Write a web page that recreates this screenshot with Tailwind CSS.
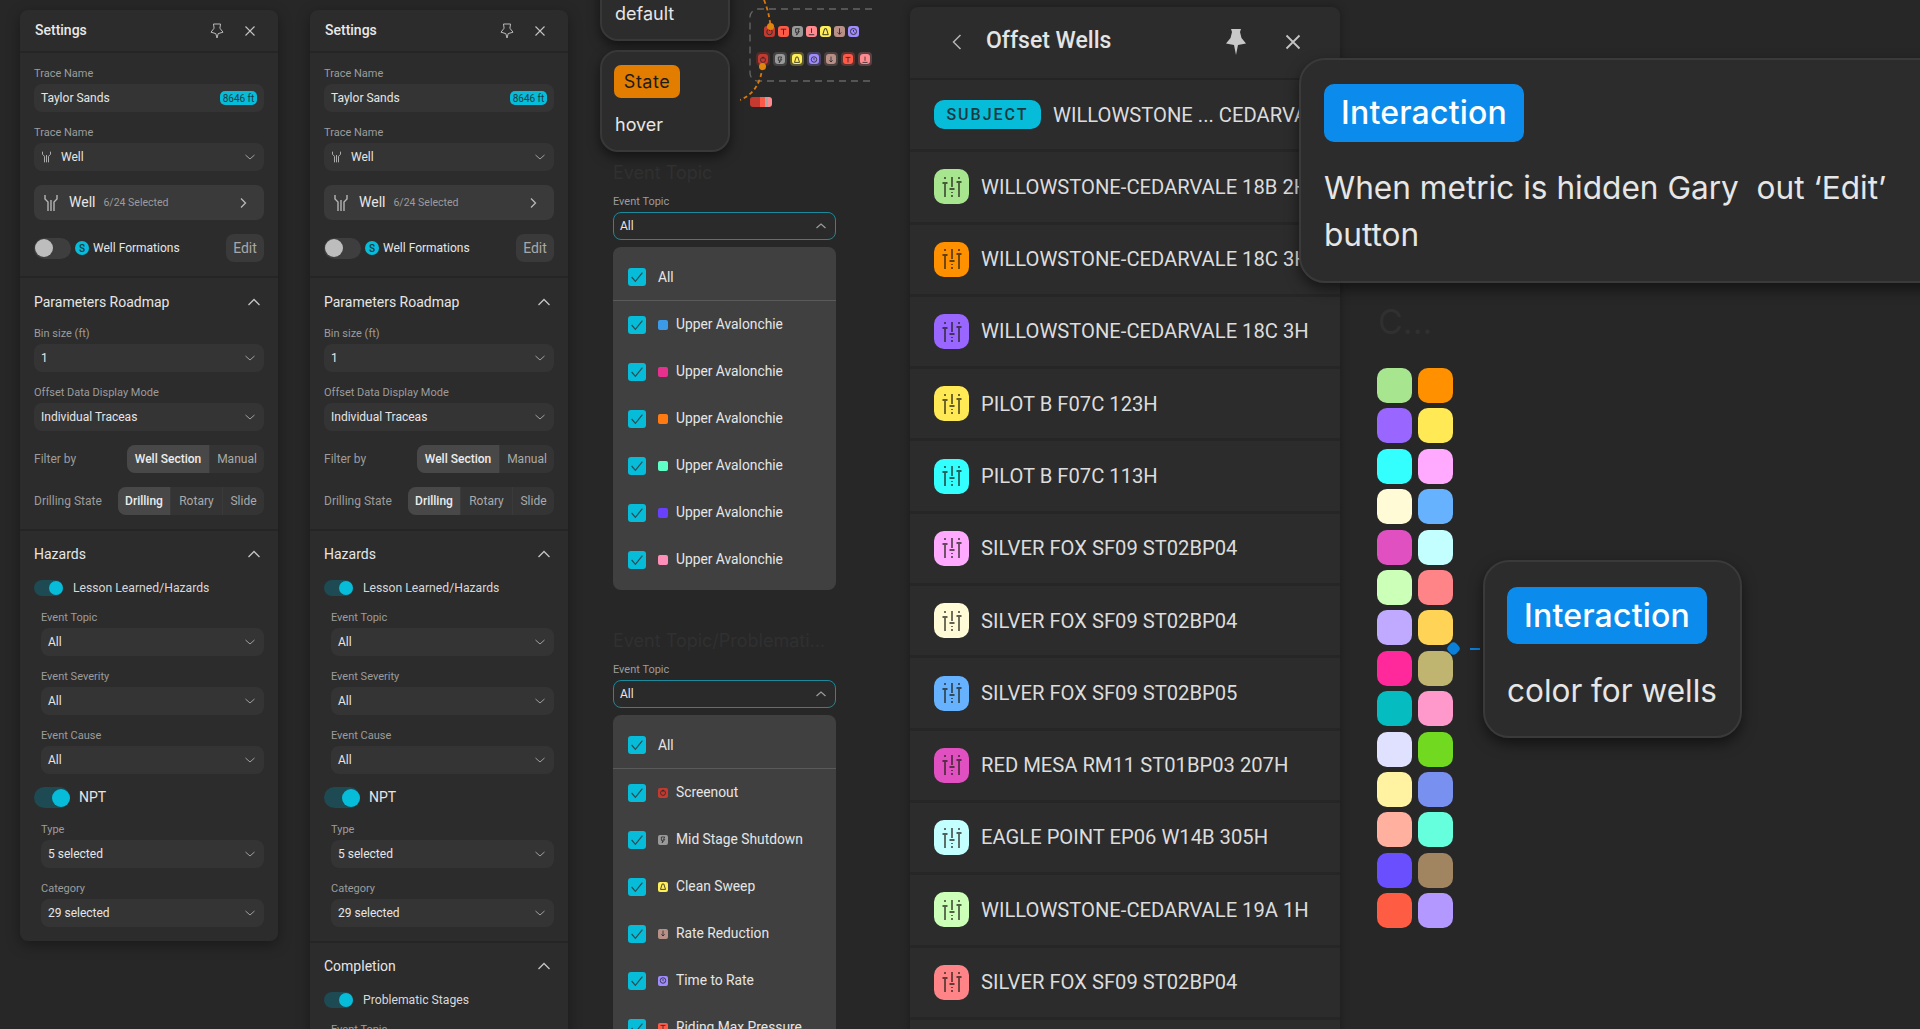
<!DOCTYPE html>
<html lang="en">
<head>
  <meta charset="UTF-8">
  <meta name="viewport" content="width=device-width, initial-scale=1.0">
  <title>Settings and Offset Wells</title>
  <script src="https://cdn.jsdelivr.net/npm/@tailwindcss/browser@4"></script>
</head>
<body class="bg-[#272727] font-['Roboto',sans-serif] text-[#e6e6e6]">
<div class="relative w-[1920px] h-[1029px] overflow-hidden">

  <!-- Settings panels -->
  <div id="panel-a" class="absolute left-[20px] top-[10px] w-[258px] bg-[#2c2c2c] rounded-lg shadow-[0_4px_14px_rgba(0,0,0,0.35)]"></div>
  <div id="panel-b" class="absolute left-[310px] top-[10px] w-[258px] bg-[#2c2c2c] rounded-lg shadow-[0_4px_14px_rgba(0,0,0,0.35)]"></div>

  <!-- State cards -->
  <div class="absolute left-[600px] top-[-60px] w-[130px] h-[101px] rounded-[18px] bg-[#2c2c2c] border-2 border-[#383838] shadow-[0_5px_12px_rgba(0,0,0,0.5)] flex flex-col justify-end pl-[13px] pb-[11px] font-['Inter',sans-serif]">
    <span class="text-[18px] leading-[28px] text-[#e6e6e6]">default</span>
  </div>
  <div class="absolute left-[600px] top-[50px] w-[130px] h-[102px] rounded-[18px] bg-[#2c2c2c] border-2 border-[#383838] shadow-[0_5px_12px_rgba(0,0,0,0.5)] pt-[13px] pl-[12px] font-['Inter',sans-serif]">
    <div class="w-[66px] h-[33px] rounded-[7px] bg-[#e27d00] flex items-center justify-center text-[18px] tracking-[0.5px] text-[#1c1c1c]">State</div>
    <div class="mt-[13px] ml-[1px] text-[18px] leading-[28px] text-[#e6e6e6]">hover</div>
  </div>

  <!-- Small flow diagram -->
  <div class="absolute left-[740px] top-0 w-[140px] h-[115px]">
    <svg class="absolute inset-0" width="140" height="115" fill="none">
      <path d="M132 9H18a8 8 0 0 0-8 8V73a8 8 0 0 0 8 8H132" stroke="#666" stroke-width="1.3" stroke-dasharray="7 5"/>
      <path d="M24 0Q29 12 30.5 26" stroke="#d97a0c" stroke-width="1.8" stroke-dasharray="4 3"/>
      <path d="M22.5 66Q20 92 0 100" stroke="#d97a0c" stroke-width="1.8" stroke-dasharray="4 3"/>
    </svg>
    <div id="diagram-a" class="absolute left-[24px] top-[26px] flex gap-[3px]"></div>
    <div id="diagram-b" class="absolute left-[16px] top-[52px] flex gap-[3px]"></div>
    <div class="absolute left-[27px] top-[23px] w-[7px] h-[7px] rounded-full bg-[#e0860f]"></div>
    <div class="absolute left-[19px] top-[63px] w-[7px] h-[7px] rounded-full bg-[#e0860f]"></div>
    <div class="absolute left-[10px] top-[97px] w-[22px] h-[10px] rounded-[3px] overflow-hidden flex">
      <div class="w-[10px] bg-[#c53a30]"></div><div class="w-[5px] bg-[#ff5a48]"></div><div class="w-[3px] bg-[#a8a8a8]"></div><div class="w-[4px] bg-[#ff8a90]"></div>
    </div>
  </div>

  <!-- Dropdown groups -->
  <div class="absolute left-[613px] top-[161px] text-[18px] leading-[24px] text-[#303030] font-['Inter',sans-serif]">Event Topic</div>
  <div id="drop-a" class="absolute left-[613px] top-[194px] w-[223px]"></div>
  <div class="absolute left-[613px] top-[629px] text-[18px] leading-[24px] text-[#303030] font-['Inter',sans-serif]">Event Topic/Problemati...</div>
  <div id="drop-b" class="absolute left-[613px] top-[662px] w-[223px]"></div>

  <!-- Offset wells -->
  <div id="wells" class="absolute left-[910px] top-[7px] w-[430px] h-[1040px] bg-[#2c2c2c] rounded-lg overflow-hidden shadow-[0_0_10px_rgba(0,0,0,0.3)]"></div>

  <!-- Note over the wells panel -->
  <div class="absolute left-[1299px] top-[58px] w-[680px] h-[225px] rounded-[26px] bg-[#2c2c2c] border-2 border-[#3a3a3a] shadow-[0_6px_14px_rgba(0,0,0,0.5)] pl-[23px] pt-[24px] font-['Inter',sans-serif]">
    <div class="w-[200px] h-[58px] rounded-[10px] bg-[#0b8cec] flex items-center justify-center text-[32px] font-medium tracking-[0.2px] text-white">Interaction</div>
    <div class="mt-[22px] w-[590px] text-[31.6px] leading-[47px] text-[#e6e6e6] whitespace-pre-wrap">When metric is hidden Gary  out ‘Edit’ button</div>
  </div>

  <div class="absolute left-[1378px] top-[302px] text-[34px] leading-[40px] text-[#303030] font-['Inter',sans-serif]">C...</div>

  <!-- Well colours -->
  <div id="swatches" class="absolute left-[1377px] top-[368px] grid grid-cols-2 gap-x-[6px] gap-y-[5.4px]"></div>

  <!-- Second note -->
  <div class="absolute left-[1448px] top-[643px] w-[11px] h-[11px] rotate-45 rounded-[4px] bg-[#0b80d8]"></div>
  <div class="absolute left-[1470px] top-[648px] w-[10px] h-[2px] bg-[#0b80d8]"></div>
  <div class="absolute left-[1483px] top-[560px] w-[259px] h-[178px] rounded-[26px] bg-[#2c2c2c] border-2 border-[#3a3a3a] shadow-[0_6px_14px_rgba(0,0,0,0.5)] pl-[22px] pt-[25px] font-['Inter',sans-serif]">
    <div class="w-[200px] h-[57px] rounded-[10px] bg-[#0b8cec] flex items-center justify-center text-[32px] font-medium tracking-[0.2px] text-white">Interaction</div>
    <div class="mt-[27px] text-[31.5px] leading-[40px] text-[#e6e6e6] whitespace-nowrap">color for wells</div>
  </div>
</div>

<script>
  // small shared icons
  const chevDown = `<svg width="14" height="14" viewBox="0 0 14 14" fill="none" stroke="#a0a0a0" stroke-width="1"><path d="M2.500 5l4.500 4 4.500-4"/></svg>`;
  const chevUp = `<svg width="16" height="16" viewBox="0 0 16 16" fill="none" stroke="#c4c4c4" stroke-width="1.3"><path d="M2.500 11L8 5.500l5.500 5.500"/></svg>`;
  const chevUpSmall = `<svg width="14" height="14" viewBox="0 0 14 14" fill="none" stroke="#9a9a9a" stroke-width="1.3"><path d="M2.500 9l4.500-4 4.500 4"/></svg>`;
  const chevRight = `<svg width="14" height="14" viewBox="0 0 14 14" fill="none" stroke="#b8b8b8" stroke-width="1.3"><path d="M5 2.500L9.500 7 5 11.500"/></svg>`;
  const closeIcon = `<svg width="14" height="14" viewBox="0 0 14 14" fill="none" stroke="#c4c4c4" stroke-width="1.1"><path d="M2.500 2.500l9 9M11.500 2.500l-9 9"/></svg>`;
  const pinOutline = `<svg width="14" height="16" viewBox="0 0 14 16" fill="none" stroke="#bbbbbb" stroke-width="1"><path d="M3.500 1h7l-.6 4.200L13 9.200 8.200 10.600 7 15l-1.200-4.400L1 9.200l3.100-4z"/></svg>`;
  const wellIcon = (w, h) => `<svg width="${w}" height="${h}" viewBox="0 0 16 18" fill="none" stroke="#b4b4b4" stroke-width="1.400"><path d="M2 1v4l3 3v9M14 1v4l-3 3v9M8 6v11"/></svg>`;

  function label(text) {
    return `<div class="h-[14px] mb-[4px] text-[11px] leading-[16px] text-[#9c9c9c]">${text}</div>`;
  }
  function select(text, icon) {
    return `<div class="h-[28px] rounded-lg bg-[#343434] flex items-center justify-between pl-[7px] pr-[7px] text-[12px] text-[#e6e6e6]">
      <span class="flex items-center gap-[9px]">${icon || ''}${text}</span>${chevDown}</div>`;
  }
  function field(name, value, cls) {
    return `<div class="${cls}">${label(name)}${select(value)}</div>`;
  }
  function toggleOn(big) {
    return big
      ? `<div class="w-[36px] h-[21px] rounded-full bg-[#1d4a53] flex items-center justify-end"><div class="w-[18px] h-[18px] rounded-full bg-[#06bcd8]"></div></div>`
      : `<div class="w-[29px] h-[16px] rounded-full bg-[#1d4a53] flex items-center justify-end"><div class="w-[14px] h-[14px] rounded-full bg-[#06bcd8]"></div></div>`;
  }
  function sectionTitle(text) {
    return `<div class="h-[20px] flex items-center justify-between pr-[2px] text-[14px] text-[#e6e6e6]">${text}${chevUp}</div>`;
  }
  function segment(name, items) {
    const parts = items.map((it, i) => `<div class="h-full flex items-center justify-center ${it[1]} ${i == 0 ? 'bg-[#484848] font-medium text-[#ececec]' : 'border-l border-[#3a3a3a] text-[#aaaaaa]'}">${it[0]}</div>`).join('');
    return `<div class="mt-[14px] flex items-center justify-between"><span class="text-[12px] text-[#9c9c9c]">${name}</span>
      <div class="h-[28px] rounded-lg bg-[#343434] overflow-hidden flex text-[12px]">${parts}</div></div>`;
  }

  function settingsPanel(withCompletion) {
    return `
    <div class="h-[41px] pl-[15px] pr-[21px] flex items-center justify-between">
      <span class="text-[14px] font-medium text-[#e8e8e8]">Settings</span>
      <span class="flex items-center gap-[19px]">${pinOutline}${closeIcon}</span>
    </div>
    <div class="border-t-2 border-b-2 border-[#252525] px-[14px] pt-[13px] pb-[14px]">
      ${label('Trace Name')}
      <div class="h-[28px] rounded-lg bg-[#343434] flex items-center justify-between pl-[7px] pr-[7px] text-[12px]">Taylor Sands
        <span class="h-[14px] w-[37px] rounded-[5px] bg-[#06bcd8] text-[#1d3a40] text-[10px] flex items-center justify-center">8646 ft</span></div>
      <div class="mt-[13px]">${label('Trace Name')}${select('Well', wellIcon(11, 12))}</div>
      <div class="mt-[14px] h-[35px] rounded-lg bg-[#3a3a3a] flex items-center justify-between pl-[9px] pr-[14px]">
        <span class="flex items-center">${wellIcon(16, 18)}<span class="ml-[10px] text-[14px]">Well</span><span class="ml-[8px] text-[10.5px] text-[#9c9c9c]">6/24 Selected</span></span>${chevRight}
      </div>
      <div class="mt-[14px] h-[28px] flex items-center">
        <div class="w-[37px] h-[21px] rounded-full bg-[#3e3e3e] flex items-center pl-[1px]"><div class="w-[18px] h-[18px] rounded-full bg-[#bdbdbd]"></div></div>
        <span class="ml-[4px] w-[14px] h-[14px] rounded-full bg-[#06bcd8] text-[#1d3a40] text-[10px] font-medium flex items-center justify-center">S</span>
        <span class="ml-[4px] text-[12px]">Well Formations</span>
        <span class="ml-auto w-[38px] h-[28px] rounded-lg bg-[#3a3a3a] flex items-center justify-center text-[14px] text-[#a8a8a8]">Edit</span>
      </div>
    </div>
    <div class="border-b-2 border-[#252525] px-[14px] pt-[14px] pb-[14px]">
      ${sectionTitle('Parameters Roadmap')}
      ${field('Bin size (ft)', '1', 'mt-[14px]')}
      ${field('Offset Data Display Mode', 'Individual Traceas', 'mt-[13px]')}
      ${segment('Filter by', [['Well Section', 'w-[82px]'], ['Manual', 'w-[55px]']])}
      ${segment('Drilling State', [['Drilling', 'w-[52px]'], ['Rotary', 'w-[52px]'], ['Slide', 'w-[42px]']])}
    </div>
    <div class="${withCompletion ? 'border-b-2 border-[#252525]' : ''} px-[14px] pt-[13px] pb-[14px]">
      ${sectionTitle('Hazards')}
      <div class="mt-[16px] h-[16px] flex items-center gap-[10px] text-[12.2px] text-[#d8d8d8]">${toggleOn(false)}Lesson Learned/Hazards</div>
      <div class="ml-[7px]">
        ${field('Event Topic', 'All', 'mt-[14px]')}
        ${field('Event Severity', 'All', 'mt-[13px]')}
        ${field('Event Cause', 'All', 'mt-[13px]')}
      </div>
      <div class="mt-[13px] flex items-center gap-[9px] text-[14px]">${toggleOn(true)}NPT</div>
      <div class="ml-[7px]">
        ${field('Type', '5 selected', 'mt-[14px]')}
        ${field('Category', '29 selected', 'mt-[13px]')}
      </div>
    </div>
    ${withCompletion ? `<div class="px-[14px] pt-[13px] pb-[14px]">
      ${sectionTitle('Completion')}
      <div class="mt-[16px] h-[16px] flex items-center gap-[10px] text-[12.2px] text-[#d8d8d8]">${toggleOn(false)}Problematic Stages</div>
      <div class="ml-[7px]">${field('Event Topic', 'All', 'mt-[14px]')}</div>
    </div>` : ''}`;
  }
  document.getElementById('panel-a').innerHTML = settingsPanel(false);
  document.getElementById('panel-b').innerHTML = settingsPanel(true);

  // tiny event glyphs, drawn on a 12 box
  const glyphs = {
    power: '<circle cx="6" cy="6.500" r="3" /><path d="M6 2.500v3"/>',
    tee: '<path d="M3 3.500h6M6 3.500v6"/>',
    bolt: '<path d="M4 3h4L6.500 6H8L5 10l.7-3H4z"/>',
    base: '<path d="M6 2.500v5M3 9.500h6"/>',
    weight: '<path d="M5 3h2l2 6.500H3z"/>',
    down: '<path d="M6 2.500v6.500M4 7l2 2 2-2"/>',
    clock: '<circle cx="6" cy="6" r="3.300"/><path d="M6 4.200V6l1 1"/>'
  };
  function glyph(kind) {
    return `<svg width="11" height="11" viewBox="0 0 12 12" fill="none" stroke="#2b2b2b" stroke-width="1">${glyphs[kind]}</svg>`;
  }

  document.getElementById('diagram-a').innerHTML = [
    ['bg-[#c53a30]', 'power'], ['bg-[#ff5a48]', 'tee'], ['bg-[#999999]', 'bolt'], ['bg-[#ff8a90]', 'base'],
    ['bg-[#ffee58]', 'weight'], ['bg-[#b89088]', 'down'], ['bg-[#a08cff]', 'clock']
  ].map(d => `<div class="w-[11px] h-[11px] rounded-[3px] ${d[0]}">${glyph(d[1])}</div>`).join('');

  document.getElementById('diagram-b').innerHTML = [
    ['bg-[#c53a30]', 'bg-[#c53a30]/25', 'power'], ['bg-[#999999]', 'bg-[#999999]/25', 'bolt'], ['bg-[#ffee58]', 'bg-[#ffee58]/25', 'weight'],
    ['bg-[#a08cff]', 'bg-[#a08cff]/25', 'clock'], ['bg-[#b89088]', 'bg-[#b89088]/25', 'down'], ['bg-[#ff5a48]', 'bg-[#ff5a48]/25', 'tee'], ['bg-[#ff8a90]', 'bg-[#ff8a90]/25', 'base']
  ].map(d => `<div class="w-[14px] h-[14px] rounded-[4px] flex items-center justify-center ${d[1]}"><div class="w-[10px] h-[10px] rounded-[3px] overflow-hidden flex items-center justify-center ${d[0]}">${glyph(d[2])}</div></div>`).join('');

  // dropdowns
  const check = `<span class="w-[18px] h-[18px] rounded-[3px] bg-[#06bcd8] flex items-center justify-center shrink-0"><svg width="14" height="14" viewBox="0 0 13 13" fill="none" stroke="#2f4a50" stroke-width="1.100"><path d="M1.500 6.500l3.500 4 6.500-8"/></svg></span>`;
  function dropdown(rows) {
    return `<div class="h-[14px] mb-[4px] text-[11px] leading-[16px] text-[#9c9c9c]">Event Topic</div>
    <div class="h-[28px] rounded-lg border border-[#1a8a9c] bg-[#2a2a2a] flex items-center justify-between pl-[6px] pr-[7px] text-[12px]">All${chevUpSmall}</div>
    <div class="mt-[7px] rounded-lg bg-[#404040] pb-[7px]">
      <div class="h-[54px] pt-[7px] pl-[15px] flex items-center gap-[12px] text-[13.8px] border-b border-[#5a5a5a]">${check}All</div>
      ${rows.map(r => `<div class="h-[47px] pl-[15px] flex items-center text-[13.8px]">${check}<span class="ml-[12px] mr-[8px] w-[10px] h-[10px] rounded-[2px] flex items-center justify-center overflow-hidden ${r[0]}">${r[2] ? glyph(r[2]) : ''}</span>${r[1]}</div>`).join('')}
    </div>`;
  }
  document.getElementById('drop-a').innerHTML = dropdown([
    ['bg-[#3b9be8]', 'Upper Avalonchie'], ['bg-[#e8308f]', 'Upper Avalonchie'], ['bg-[#ff7a10]', 'Upper Avalonchie'],
    ['bg-[#5fffc8]', 'Upper Avalonchie'], ['bg-[#6a40ff]', 'Upper Avalonchie'], ['bg-[#ff8fb8]', 'Upper Avalonchie']
  ]);
  document.getElementById('drop-b').innerHTML = dropdown([
    ['bg-[#c53a30]', 'Screenout', 'power'], ['bg-[#999999]', 'Mid Stage Shutdown', 'bolt'], ['bg-[#ffee58]', 'Clean Sweep', 'weight'],
    ['bg-[#b89088]', 'Rate Reduction', 'down'], ['bg-[#a08cff]', 'Time to Rate', 'clock'], ['bg-[#ff5a48]', 'Riding Max Pressure', 'tee']
  ]);

  // offset wells list
  const sliders = `<svg width="26" height="26" viewBox="0 0 26 26" fill="none" stroke="#1e1e14" stroke-opacity="0.7" stroke-width="1.800"><path d="M6 3v2M3.500 9h5M6 9v14M13 3v10M10.500 15h5M13 18v1M13 21v2M20 3v2M17.500 8h5M20 8v15"/></svg>`;
  const wells = [
    ['bg-[#a8e58f]', 'WILLOWSTONE-CEDARVALE 18B 2H'], ['bg-[#ff9100]', 'WILLOWSTONE-CEDARVALE 18C 3H'], ['bg-[#9966ff]', 'WILLOWSTONE-CEDARVALE 18C 3H'],
    ['bg-[#ffe955]', 'PILOT B F07C 123H'], ['bg-[#33ffff]', 'PILOT B F07C 113H'], ['bg-[#ffaaff]', 'SILVER FOX SF09 ST02BP04'],
    ['bg-[#fffbd6]', 'SILVER FOX SF09 ST02BP04'], ['bg-[#66b2ff]', 'SILVER FOX SF09 ST02BP05'], ['bg-[#e050c0]', 'RED MESA RM11 ST01BP03 207H'],
    ['bg-[#c4ffff]', 'EAGLE POINT EP06 W14B 305H'], ['bg-[#ccffb8]', 'WILLOWSTONE-CEDARVALE 19A 1H'], ['bg-[#ff8488]', 'SILVER FOX SF09 ST02BP04'],
    ['bg-[#c0aaff]', '']
  ];
  document.getElementById('wells').innerHTML = `
    <div class="h-[73px] pb-[2px] border-b-2 border-[#242424] flex items-center pl-[39px] pr-[37px]">
      <svg width="16" height="20" viewBox="0 0 16 20" fill="none" stroke="#b4b4b4" stroke-width="1.500"><path d="M11.500 3L4.500 10l7 7"/></svg>
      <span class="ml-[21px] text-[23px] font-medium text-[#e4e4e4]">Offset Wells</span>
      <svg class="ml-auto" width="22" height="28" viewBox="0 0 22 28" fill="#c8c8c8"><path d="M6 1h10l-1 3 1.500 6L21 15.500 13 17l-2 10-2-10-8-1.500L5.500 10 7 4z"/></svg>
      <svg class="ml-[36px]" width="20" height="20" viewBox="0 0 20 20" fill="none" stroke="#c4c4c4" stroke-width="1.800"><path d="M3.500 3.500l13 13M16.500 3.500l-13 13"/></svg>
    </div>
    <div class="h-[72.300px] border-b-[3px] border-[#262626] flex items-center pl-[24px] whitespace-nowrap">
      <span class="w-[107px] h-[29px] rounded-[10px] bg-[#06bcd8] text-[#1d3a40] text-[16px] font-medium tracking-[2px] flex items-center justify-center">SUBJECT</span>
      <span class="ml-[12px] text-[20.2px] text-[#dcdcdc]">WILLOWSTONE ... CEDARVALE</span>
    </div>
    ${wells.map(w => `<div class="h-[72.300px] border-b-[3px] border-[#262626] flex items-center pl-[24px] whitespace-nowrap">
      <span class="w-[35px] h-[35px] rounded-[10px] flex items-center justify-center ${w[0]}">${sliders}</span>
      <span class="ml-[12px] text-[20.2px] text-[#dcdcdc]">${w[1]}</span></div>`).join('')}`;

  // swatches
  document.getElementById('swatches').innerHTML = [
    'bg-[#a8e58f]', 'bg-[#ff9100]', 'bg-[#9966ff]', 'bg-[#ffe955]', 'bg-[#33ffff]', 'bg-[#ffaaff]', 'bg-[#fffbd6]', 'bg-[#66b2ff]',
    'bg-[#e050c0]', 'bg-[#c4ffff]', 'bg-[#ccffb8]', 'bg-[#ff8488]', 'bg-[#c0aaff]', 'bg-[#ffd355]', 'bg-[#ff299c]', 'bg-[#bfb570]',
    'bg-[#05bcc0]', 'bg-[#ff99cc]', 'bg-[#e0e0ff]', 'bg-[#70d920]', 'bg-[#fff2a0]', 'bg-[#7890f0]', 'bg-[#ffb09e]', 'bg-[#66ffdd]',
    'bg-[#6a4fff]', 'bg-[#a08560]', 'bg-[#ff5c44]', 'bg-[#b399ff]'
  ].map(c => `<div class="w-[35px] h-[35px] rounded-[10px] ${c}"></div>`).join('');
</script>
</body>
</html>
